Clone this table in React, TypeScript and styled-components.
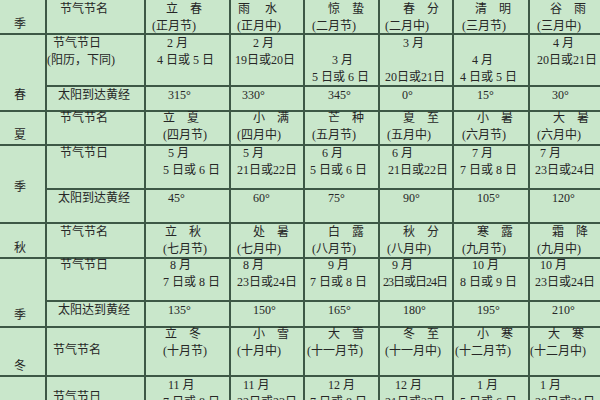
import React from "react";
import styled, { createGlobalStyle } from "styled-components";

const LINE = "#3d5846";
const BG = "#c9e7cb";

const Global = createGlobalStyle`
  html, body { margin: 0; padding: 0; background: ${BG}; }
  body { width: 600px; height: 400px; overflow: hidden; }
`;

const Table = styled.div`
  display: grid;
  width: 600px;
  height: 400px;
  overflow: hidden;
  grid-template-columns: 45px 97px 83px 72px 73px 72px 74px 70px;
  grid-template-rows: 33px 50px 23px 32px 42px 32px 33px 41px 24px 47px 40px;
  gap: 2px;
  background: ${LINE};
  font-family: "Liberation Serif", "Noto Sans CJK SC", serif;
  font-size: 12px;
  color: #262626;
`;

const Cell = styled.div<{ $row: number; $span?: number }>`
  grid-row: ${(p) => p.$row} / span ${(p) => p.$span ?? 1};
  background: ${BG};
  line-height: 17px;
  white-space: pre;
  min-width: 0;
`;

const SeasonCell = styled(Cell)<{ $pb: number }>`
  grid-column: 1;
  display: flex;
  flex-direction: column;
  justify-content: flex-end;
  align-items: center;
  padding: 0 5px ${(p) => p.$pb}px 0;
`;

const LabelCell = styled(Cell)`
  grid-column: 2;
`;

const DataCell = styled(Cell)``;

const Stack = styled.div<{ $dy: number }>`
  display: flex;
  flex-direction: column;
  margin-top: ${(p) => p.$dy}px;
`;

const TextLine = styled.span<{ $indent: number; $ls?: number }>`
  display: block;
  height: 17px;
  padding-left: ${(p) => p.$indent}px;
  letter-spacing: ${(p) => p.$ls ?? 0}px;
`;

type L = [string, number, number?] | null;

interface RowSpec {
  dy: number;
  label: L[];
  labelDy?: number;
  cells: L[][];
}

const rows: RowSpec[] = [
  {
    dy: 1,
    label: [["节气节名", 13]],
    cells: [
      [["立　春", 20], ["(正月节)", 6]],
      [["雨　 水", 7], ["(正月中)", 6]],
      [["惊　蛰", 23], ["(二月节)", 7]],
      [["春　分", 23], ["(二月中)", 5]],
      [["清　明", 21], ["(三月节)", 8]],
      [["谷　雨", 20], ["(三月中)", 7]],
    ],
  },
  {
    dy: 0,
    label: [["节气节日", 6], ["(阳历，下同)", 0]],
    cells: [
      [["2 月", 21], ["4 日或 5 日", 11]],
      [["2 月", 22], ["19日或20日", 4]],
      [null, ["3 月", 27], ["5 日或 6 日", 7]],
      [["3 月", 23], null, ["20日或21日", 5]],
      [null, ["4 月", 18], ["4 日或 5 日", 6]],
      [["4 月", 23], ["20日或21日", 7]],
    ],
  },
  {
    dy: 0,
    label: [["太阳到达黄经", 11]],
    cells: [
      [["315°", 22]],
      [["330°", 11]],
      [["345°", 23]],
      [["0°", 22]],
      [["15°", 23]],
      [["30°", 22]],
    ],
  },
  {
    dy: -2,
    label: [["节气节名", 13]],
    cells: [
      [["立　夏", 17], ["(四月节)", 17]],
      [["小　满", 22], ["(四月中)", 6]],
      [["芒　种", 23], ["(五月节)", 7]],
      [["夏　至", 23], ["(五月中)", 7]],
      [["小　暑", 23], ["(六月节)", 8]],
      [["大　暑", 23], ["(六月中)", 7]],
    ],
  },
  {
    dy: -1,
    label: [["节气节日", 13]],
    cells: [
      [["5 月", 22], ["5 日或 6 日", 17]],
      [["5 月", 12], ["21日或22日", 6]],
      [["6 月", 17], ["5 日或 6 日", 5]],
      [["6 月", 12], ["21日或22日", 8]],
      [["7 月", 18], ["7 日或 8 日", 6]],
      [["7 月", 10], ["23日或24日", 5]],
    ],
  },
  {
    dy: 0,
    label: [["太阳到达黄经", 11]],
    cells: [
      [["45°", 22]],
      [["60°", 22]],
      [["75°", 23]],
      [["90°", 23]],
      [["105°", 23]],
      [["120°", 22]],
    ],
  },
  {
    dy: 0,
    label: [["节气节名", 13]],
    cells: [
      [["立　秋", 19], ["(七月节)", 17]],
      [["处　暑", 22], ["(七月中)", 6]],
      [["白　露", 23], ["(八月节)", 7]],
      [["秋　分", 23], ["(八月中)", 7]],
      [["寒　露", 23], ["(九月节)", 8]],
      [["霜　降", 22], ["(九月中)", 7]],
    ],
  },
  {
    dy: -2,
    label: [["节气节日", 13]],
    cells: [
      [["8 月", 24], ["7 日或 8 日", 17]],
      [["8 月", 12], ["23日或24日", 6]],
      [["9 月", 23], ["7 日或 8 日", 5]],
      [["9 月", 12], ["23日或日24日", 3, -1]],
      [["10 月", 18], ["8 日或 9 日", 6]],
      [["10 月", 10], ["23日或24日", 5]],
    ],
  },
  {
    dy: 0,
    label: [["太阳达到黄经", 11]],
    cells: [
      [["135°", 22]],
      [["150°", 22]],
      [["165°", 23]],
      [["180°", 23]],
      [["195°", 23]],
      [["210°", 22]],
    ],
  },
  {
    dy: -2,
    label: [["节气节名", 6]],
    labelDy: 14,
    cells: [
      [["立　冬", 19], ["(十月节)", 17]],
      [["小　雪", 22], ["(十月中)", 6]],
      [["大　雪", 23], ["(十一月节)", 2]],
      [["冬　至", 23], ["(十一月中)", 5]],
      [["小　寒", 23], ["(十二月节)", 1]],
      [["大　寒", 18], ["(十二月中)", 0]],
    ],
  },
  {
    dy: 0,
    label: [["节气节日", 6]],
    labelDy: 12,
    cells: [
      [["11 月", 22], ["7 日或 8 日", 17]],
      [["11 月", 12], ["22日或23日", 6]],
      [["12 月", 23], ["7 日或 8 日", 5]],
      [["12 月", 15], ["21日或22日", 5]],
      [["1 月", 23], ["5 日或 6 日", 6]],
      [["1 月", 10], ["20日或21日", 5]],
    ],
  },
];

const seasons: { text: string; row: number; span: number; pb: number }[] = [
  { text: "季", row: 1, span: 1, pb: 0 },
  { text: "春", row: 2, span: 2, pb: 6 },
  { text: "夏", row: 4, span: 1, pb: 0 },
  { text: "季", row: 5, span: 2, pb: 26 },
  { text: "秋", row: 7, span: 1, pb: 0 },
  { text: "季", row: 8, span: 2, pb: 2 },
  { text: "冬", row: 10, span: 1, pb: 0 },
  { text: "", row: 11, span: 1, pb: 0 },
];

const Lines: React.FC<{ lines: L[]; dy: number }> = ({ lines, dy }) => (
  <Stack $dy={dy}>
    {lines.map((l, i) =>
      l ? (
        <TextLine key={i} $indent={l[1]} $ls={l[2]}>
          {l[0]}
        </TextLine>
      ) : (
        <TextLine key={i} $indent={0} />
      )
    )}
  </Stack>
);

export default function App() {
  return (
    <>
      <Global />
      <Table>
        {seasons.map((s, i) => (
          <SeasonCell key={`s${i}`} $row={s.row} $span={s.span} $pb={s.pb}>
            {s.text}
          </SeasonCell>
        ))}
        {rows.map((r, ri) => (
          <React.Fragment key={`r${ri}`}>
            <LabelCell $row={ri + 1}>
              <Lines lines={r.label} dy={r.labelDy ?? r.dy} />
            </LabelCell>
            {r.cells.map((c, ci) => (
              <DataCell key={ci} $row={ri + 1}>
                <Lines lines={c} dy={r.dy} />
              </DataCell>
            ))}
          </React.Fragment>
        ))}
      </Table>
    </>
  );
}
